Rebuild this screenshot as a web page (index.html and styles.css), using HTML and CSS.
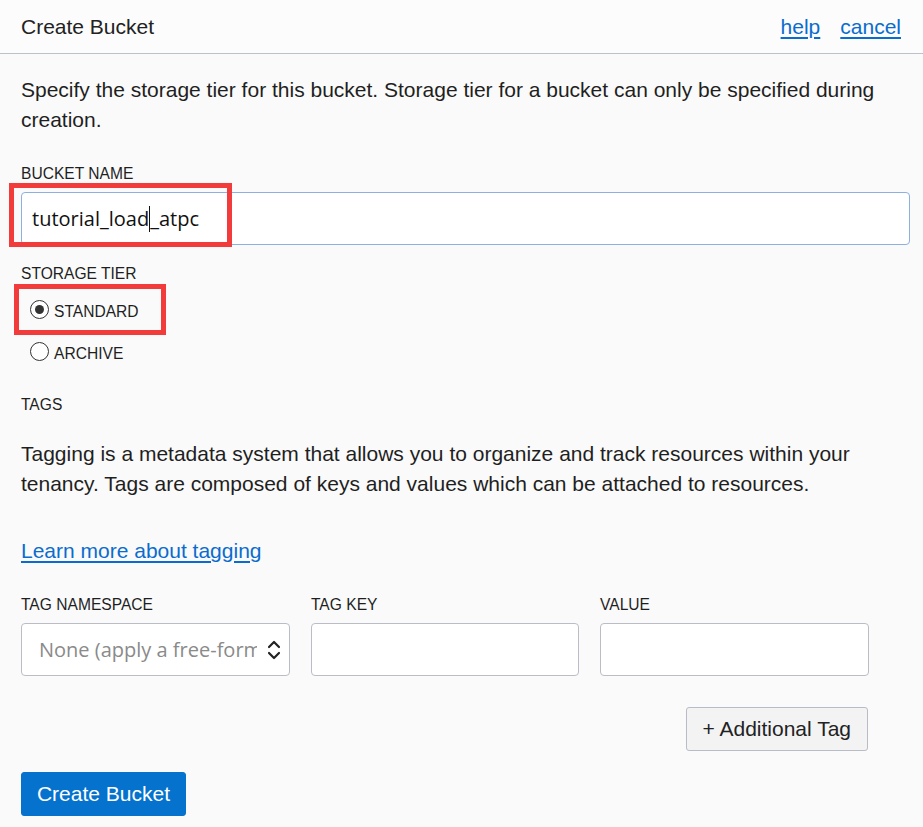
FILE: index.html
```html
<!DOCTYPE html>
<html lang="en">
<head>
<meta charset="utf-8">
<title>Create Bucket</title>
<link rel="stylesheet" href="styles.css">
</head>
<body>
<div class="panel">
  <header class="header">
    <h1 class="title">Create Bucket</h1>
    <nav class="header-links">
      <a href="#" class="link">help</a>
      <a href="#" class="link">cancel</a>
    </nav>
  </header>
  <main class="content">
    <p class="desc">Specify the storage tier for this bucket. Storage tier for a bucket can only be specified during creation.</p>

    <div class="field field-name">
      <label class="label">BUCKET NAME</label>
      <div class="text-input focused"><span class="input-text">tutorial_load</span><span class="caret"></span><span class="input-text">_atpc</span></div>
      <span class="highlight hl-name"></span>
    </div>

    <div class="field field-tier">
      <label class="label">STORAGE TIER</label>
      <div class="radio-row checked-row">
        <span class="radio checked"></span><span class="radio-label">STANDARD</span>
        <span class="highlight hl-tier"></span>
      </div>
      <div class="radio-row">
        <span class="radio"></span><span class="radio-label">ARCHIVE</span>
      </div>
    </div>

    <div class="label tags-label">TAGS</div>
    <p class="desc tags-desc">Tagging is a metadata system that allows you to organize and track resources within your tenancy. Tags are composed of keys and values which can be attached to resources.</p>
    <a href="#" class="link learn">Learn more about tagging</a>

    <div class="tag-grid">
      <div class="tag-col">
        <label class="label">TAG NAMESPACE</label>
        <div class="text-input select">
          <span class="placeholder">None (apply a free-form tag)</span>
          <svg class="chev" width="14" height="22" viewBox="0 0 14 22"><path d="M2 8 L7 3 L12 8" fill="none" stroke="#222" stroke-width="2.2" stroke-linecap="round" stroke-linejoin="round"/><path d="M2 14 L7 19 L12 14" fill="none" stroke="#222" stroke-width="2.2" stroke-linecap="round" stroke-linejoin="round"/></svg>
        </div>
      </div>
      <div class="tag-col">
        <label class="label">TAG KEY</label>
        <div class="text-input"></div>
      </div>
      <div class="tag-col">
        <label class="label">VALUE</label>
        <div class="text-input"></div>
      </div>
    </div>

    <div class="add-row">
      <button class="btn btn-secondary">+ Additional Tag</button>
    </div>

    <button class="btn btn-primary">Create Bucket</button>
  </main>
</div>
</body>
</html>
```

FILE: styles.css
```css
* { box-sizing: border-box; }
html, body { margin: 0; padding: 0; }
body {
  background: #fafafa;
  font-family: "Liberation Sans", Arial, sans-serif;
  color: #1f1f1f;
  width: 923px;
  height: 827px;
  overflow: hidden;
}
.header {
  height: 54px;
  display: flex;
  align-items: center;
  justify-content: space-between;
  padding: 0 22px 0 21px;
  background: #fcfcfd;
  border-bottom: 1px solid #bcc1cc;
}
.title {
  margin: 0;
  font-size: 21px;
  font-weight: normal;
  color: #222;
  line-height: 1;
}
.header-links { display: flex; gap: 20px; }
.link {
  color: #0a6cce;
  font-size: 21px;
  text-decoration: underline;
  text-underline-offset: 3px;
}
.content {
  padding: 21px 13px 0 21px;
}
.desc {
  margin: 0;
  font-size: 21px;
  line-height: 30px;
  color: #1f1f1f;
}
.label {
  display: block;
  font-size: 15.6px;
  line-height: 18px;
  color: #1f1f1f;
}
.field { position: relative; }
.field-name { margin-top: 30px; }
.field-name .text-input { margin-top: 9px; }
.text-input {
  height: 53px;
  background: #fff;
  border: 1px solid #babdc6;
  border-radius: 4px;
  display: flex;
  align-items: center;
  padding: 0 10px;
  font-family: "Open Sans", "Noto Sans", sans-serif;
  font-size: 20px;
  color: #111;
}
.text-input.focused { border-color: #8db0e3; }
.caret {
  display: inline-block;
  width: 1px;
  height: 26px;
  background: #111;
}
.highlight {
  position: absolute;
  border: 5px solid #f23b3b;
  pointer-events: none;
}
.hl-name { left: -12px; top: 18px; width: 223px; height: 64px; }
.field-tier { margin-top: 20px; }
.radio-row {
  position: relative;
  display: flex;
  align-items: center;
  height: 24px;
  margin-top: 17px;
  padding-left: 9px;
}
.radio-row + .radio-row { margin-top: 18px; }
.radio {
  width: 19px;
  height: 19px;
  border: 1.5px solid #333;
  border-radius: 50%;
  background: #fff;
  display: flex;
  align-items: center;
  justify-content: center;
  margin-right: 5px;
  position: relative;
  top: -3px;
}
.radio.checked::after {
  content: "";
  width: 9px;
  height: 9px;
  border-radius: 50%;
  background: #333;
}
.radio-label { font-size: 15.6px; color: #1f1f1f; }
.hl-tier { left: -7px; top: -16px; width: 152px; height: 51px; }
.tags-label { margin-top: 30px; }
.tags-desc { margin-top: 25px; }
.learn { display: inline-block; margin-top: 37px; line-height: 30px; }
.tag-grid {
  display: grid;
  grid-template-columns: 269px 268px 269px;
  column-gap: 21px;
  margin-top: 30px;
}
.tag-grid .text-input { margin-top: 9px; }
.select { padding: 0 8px 0 17px; justify-content: space-between; overflow: hidden; }
.placeholder {
  color: #8a8a8a;
  white-space: nowrap;
  overflow: hidden;
  flex: 1;
  min-width: 0;
}
.chev { flex: none; margin-left: 10px; }
.add-row {
  display: flex;
  justify-content: flex-end;
  width: 847px;
  margin-top: 31px;
}
.btn {
  font-family: "Liberation Sans", Arial, sans-serif;
  font-size: 21px;
  height: 44px;
  border-radius: 3px;
  padding: 0 16px;
  cursor: pointer;
}
.btn-secondary {
  background: #f3f3f4;
  border: 1px solid #b7bcc6;
  color: #222;
}
.btn-primary {
  display: block;
  margin-top: 21px;
  background: #0572ce;
  border: 1px solid #0572ce;
  color: #fff;
  width: 165px;
  padding: 0;
}
```
